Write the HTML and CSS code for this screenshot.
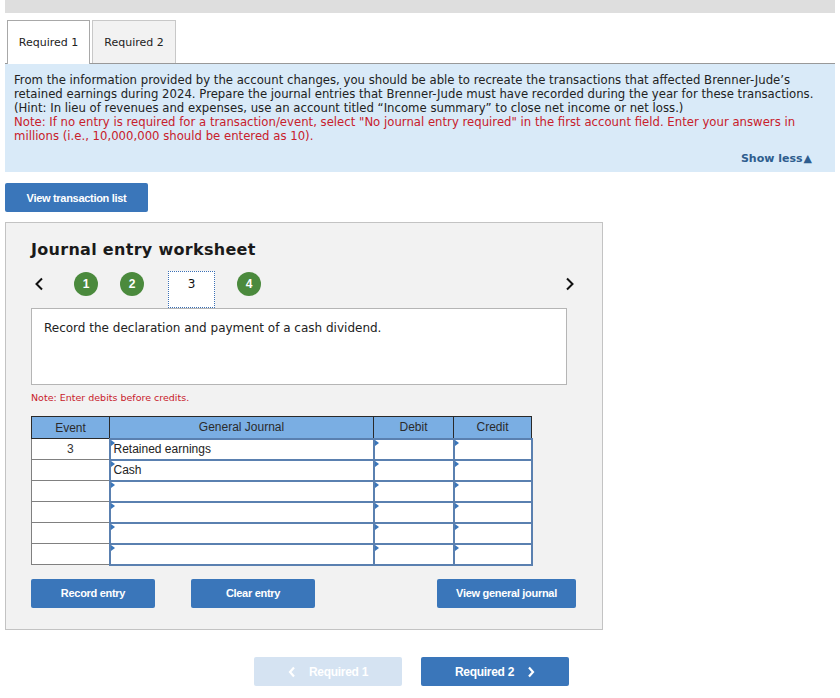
FILE: index.html
```html
<!DOCTYPE html>
<html>
<head>
<meta charset="utf-8">
<link rel="stylesheet" href="styles.css">
</head>
<body>
<div class="topbar"></div>
<div class="tabs">
  <div class="tab active">Required 1</div>
  <div class="tab">Required 2</div>
</div>
<div class="instructions">
  <p class="intro">From the information provided by the account changes, you should be able to recreate the transactions that affected Brenner-Jude’s retained earnings during 2024. Prepare the journal entries that Brenner-Jude must have recorded during the year for these transactions. (Hint: In lieu of revenues and expenses, use an account titled “Income summary” to close net income or net loss.)<br><span class="red">Note: If no entry is required for a transaction/event, select "No journal entry required" in the first account field. Enter your answers in millions (i.e., 10,000,000 should be entered as 10).</span></p>
  <div class="showless">Show less<span class="tri">▲</span></div>
</div>
<div class="btnrow"><button class="btn wide">View transaction list</button></div>
<div class="panel">
  <h2 class="title">Journal entry worksheet</h2>
  <div class="stepnav">
    <svg class="chev" width="10" height="14" viewBox="0 0 10 14"><path d="M8 1.5 L2.5 7 L8 12.5" fill="none" stroke="#111" stroke-width="2"/></svg>
    <span class="step done s1">1</span>
    <span class="step done s2">2</span>
    <span class="step current">3</span>
    <span class="step done s4">4</span>
    <svg class="chev right" width="10" height="14" viewBox="0 0 10 14"><path d="M2 1.5 L7.5 7 L2 12.5" fill="none" stroke="#111" stroke-width="2"/></svg>
  </div>
  <div class="desc">Record the declaration and payment of a cash dividend.</div>
  <div class="note">Note: Enter debits before credits.</div>
  <table class="journal">
    <thead>
      <tr><th class="c-ev">Event</th><th class="c-gj">General Journal</th><th class="c-dr">Debit</th><th class="c-cr">Credit</th></tr>
    </thead>
    <tbody>
      <tr><td class="ev">3</td><td class="in">Retained earnings</td><td class="in"></td><td class="in"></td></tr>
      <tr><td class="ev"></td><td class="in">Cash</td><td class="in"></td><td class="in"></td></tr>
      <tr><td class="ev"></td><td class="in"></td><td class="in"></td><td class="in"></td></tr>
      <tr><td class="ev"></td><td class="in"></td><td class="in"></td><td class="in"></td></tr>
      <tr><td class="ev"></td><td class="in"></td><td class="in"></td><td class="in"></td></tr>
      <tr><td class="ev"></td><td class="in"></td><td class="in"></td><td class="in"></td></tr>
    </tbody>
  </table>
  <div class="actions">
    <button class="btn act">Record entry</button>
    <button class="btn act clear">Clear entry</button>
    <button class="btn act gj">View general journal</button>
  </div>
</div>
<div class="bottomnav">
  <button class="btn nav disabled"><svg class="navarr" width="8" height="12" viewBox="0 0 8 12"><path d="M6 1.5 L2 6 L6 10.5" fill="none" stroke="#fff" stroke-width="2.2"/></svg>Required 1</button>
  <button class="btn nav">Required 2<svg class="navarr after" width="8" height="12" viewBox="0 0 8 12"><path d="M2 1.5 L6 6 L2 10.5" fill="none" stroke="#fff" stroke-width="2.2"/></svg></button>
</div>
</body>
</html>
```
FILE: styles.css
```css
* { box-sizing: border-box; }
body {
  margin: 0;
  font-family: "DejaVu Sans", Verdana, sans-serif;
  color: #222;
  background: #fff;
  width: 840px;
}
.topbar {
  margin: 0 5px;
  height: 13px;
  background: #dedede;
}
.tabs {
  display: flex;
  gap: 2px;
  margin: 7px 5px 0;
  padding-left: 2px;
  border-bottom: 1px solid #999;
}
.tab {
  width: 84px;
  height: 43px;
  display: flex;
  align-items: center;
  justify-content: center;
  font-size: 11px;
  color: #222;
  background: #f2f2f2;
  border: 1px solid #c8c8c8;
  border-bottom: none;
  margin-bottom: -1px;
}
.tab.active {
  width: 83px;
  background: #fff;
  border-color: #a8a8a8;
  height: 44px;
}
.instructions {
  margin: 0 5px;
  background: #d9eaf8;
  padding: 9px 9px 6px 9px;
  height: 108px;
}
.intro {
  margin: 0;
  font-size: 11.7px;
  line-height: 14px;
  color: #222;
}
.red { color: #c8202b; }
.showless {
  text-align: right;
  margin-top: 9px;
  margin-right: 14px;
  font-size: 11px;
  font-weight: bold;
  color: #2e5d8e;
}
.tri { font-size: 11px; margin-left: 1px; }
.btnrow { padding: 11px 5px 10px; }
.btn {
  font-family: "Liberation Sans", Arial, sans-serif;
  font-weight: bold;
  font-size: 11px;
  letter-spacing: -0.3px;
  color: #fff;
  background: #3a76ba;
  border: none;
  border-radius: 2px;
  height: 29px;
  cursor: pointer;
  padding: 0;
}
.btn.wide { width: 143px; }
.panel {
  margin: 0 5px;
  width: 598px;
  height: 408px;
  background: #f2f2f2;
  border: 1px solid #c3c3c3;
  padding: 0 0 0 25px;
}
.title {
  margin: 17px 0 0;
  font-size: 16px;
  font-weight: bold;
  color: #1a1a1a;
  letter-spacing: 0.3px;
}
.stepnav {
  display: flex;
  align-items: flex-start;
  height: 37px;
  margin-top: 12px;
  width: 548px;
}
.chev { margin-left: 3px; margin-top: 6px; }
.chev.right { margin-left: auto; margin-right: 4px; }
.step {
  display: flex;
  align-items: center;
  justify-content: center;
}
.step.done {
  width: 24px;
  height: 24px;
  margin-top: 1px;
  border-radius: 50%;
  background: #4b8a3d;
  color: #fff;
  font-family: "Liberation Sans", Arial, sans-serif;
  font-weight: bold;
  font-size: 12px;
}
.s1 { margin-left: 30px; }
.s2 { margin-left: 22px; }
.s4 { margin-left: 22px; }
.step.current {
  margin-left: 24px;
  width: 47px;
  height: 37px;
  background: #fff;
  border: 1px dotted #3a6fb5;
  align-items: flex-start;
  padding-top: 5px;
  font-size: 12px;
  color: #111;
  margin-bottom: -1px;
  position: relative;
  z-index: 1;
}
.desc {
  width: 536px;
  height: 77px;
  background: #fff;
  border: 1px solid #b5b5b5;
  padding: 12px 12px;
  font-size: 12px;
  color: #222;
}
.note {
  margin-top: 7px;
  font-size: 9.5px;
  color: #c8202b;
}
.journal {
  margin-top: 13px;
  border-collapse: collapse;
  font-family: "Liberation Sans", Arial, sans-serif;
  font-size: 12px;
}
.journal th {
  background: #7aaee3;
  border: 1px solid #2a2a2a;
  height: 22px;
  font-weight: normal;
  color: #2b2b2b;
  padding: 0;
}
.c-ev { width: 78px; }
.c-gj { width: 264px; }
.c-dr { width: 80px; }
.c-cr { width: 78px; }
.journal td {
  height: 21px;
  padding: 0;
}
.journal td.ev {
  border: 1px solid #808080;
  background: #fff;
  text-align: center;
  color: #333;
}
.journal td.in {
  border: 2px solid #5a80b0;
  background: #fff;
  position: relative;
  padding-left: 3px;
  color: #222;
  vertical-align: middle;
}
.journal td.in::before {
  content: "";
  position: absolute;
  left: 0;
  top: 0;
  border-left: 4px solid #3a76ba;
  border-top: 3px solid transparent;
  border-bottom: 3px solid transparent;
}
.actions {
  display: flex;
  margin-top: 13px;
  width: 545px;
}
.btn.act { width: 124px; }
.btn.act.clear { margin-left: 36px; }
.btn.act.gj { width: 139px; margin-left: auto; }
.bottomnav {
  display: flex;
  gap: 19px;
  margin-top: 27px;
  padding-left: 254px;
}
.btn.nav {
  width: 148px;
  font-size: 12px;
  display: flex;
  align-items: center;
  justify-content: center;
}
.btn.nav.disabled {
  background: #d5e3f2;
  color: #fff;
}
.navarr { margin-right: 13px; }
.navarr.after { margin-right: 0; margin-left: 13px; }
```
